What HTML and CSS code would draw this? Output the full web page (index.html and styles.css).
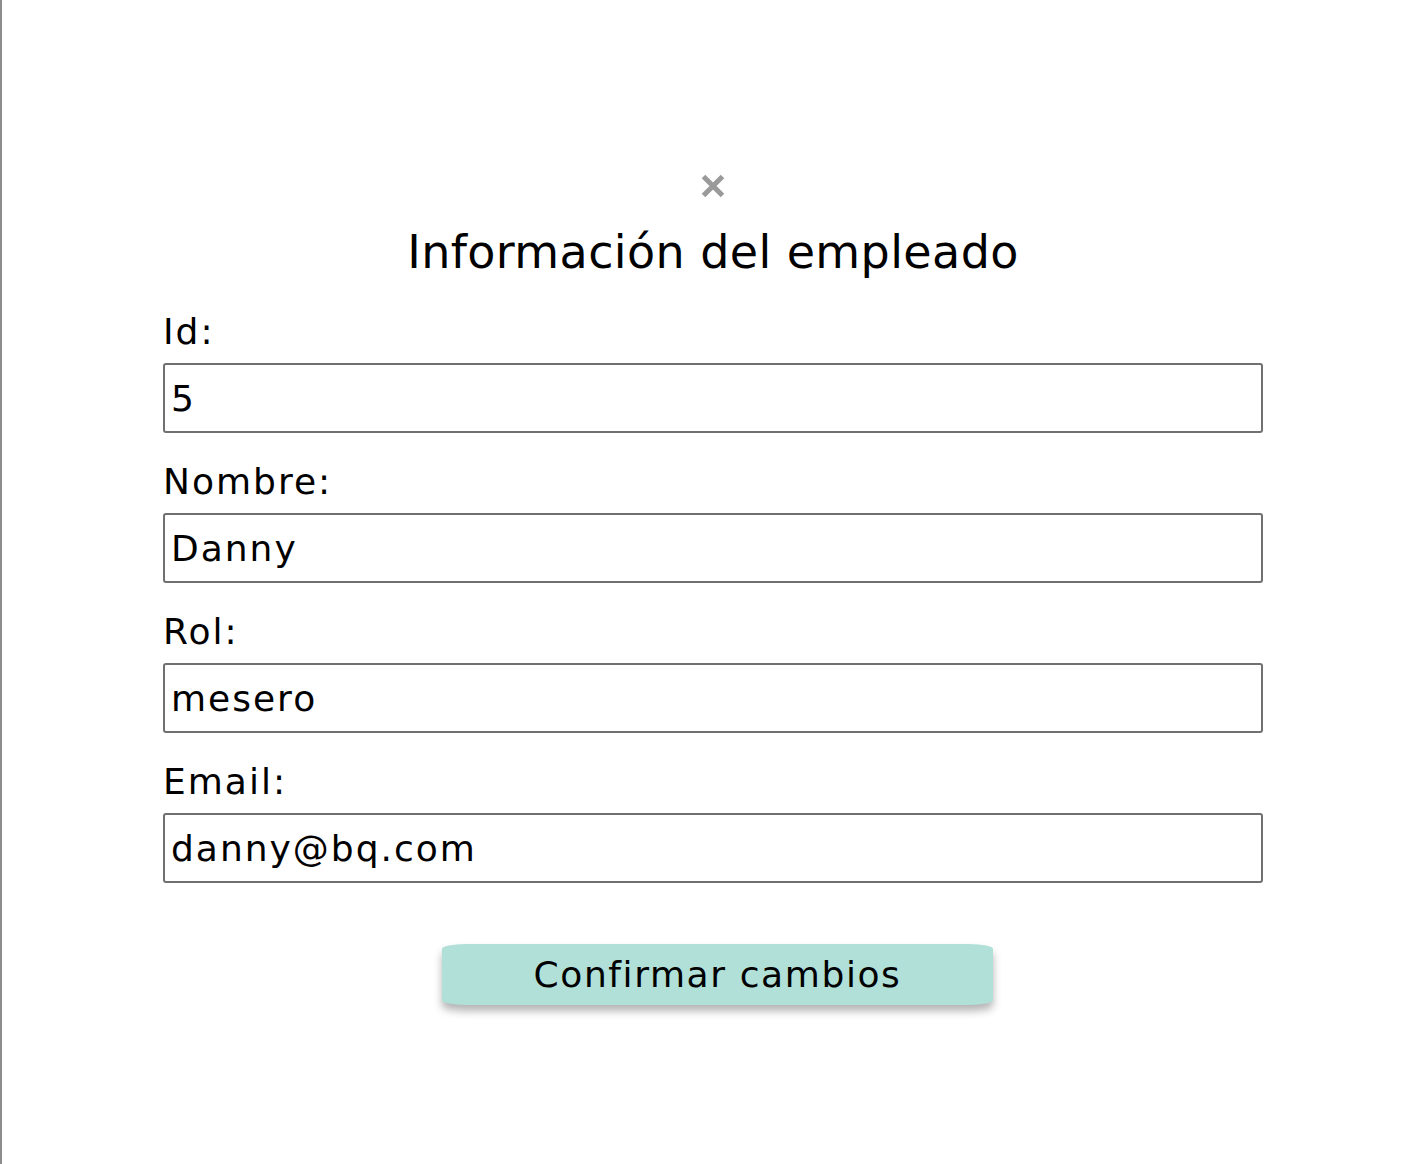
FILE: index.html
```html
<!DOCTYPE html>
<html lang="es">
<head>
<meta charset="utf-8">
<title>Información del empleado</title>
<link rel="stylesheet" href="styles.css">
</head>
<body>
<main class="modal">
  <button class="close" type="button" aria-label="Cerrar">
    <svg width="24" height="24" viewBox="0 0 24 24"><path d="M2.5 2.5 L21.5 21.5 M21.5 2.5 L2.5 21.5" stroke="#9a9a9a" stroke-width="5" fill="none"/></svg>
  </button>
  <h1 class="title">Información del empleado</h1>
  <form class="form">
    <div class="field">
      <label class="label">Id:</label>
      <input class="input" type="text" value="5">
    </div>
    <div class="field">
      <label class="label">Nombre:</label>
      <input class="input" type="text" value="Danny">
    </div>
    <div class="field">
      <label class="label">Rol:</label>
      <input class="input" type="text" value="mesero">
    </div>
    <div class="field">
      <label class="label">Email:</label>
      <input class="input" type="text" value="danny@bq.com">
    </div>
    <div class="actions">
      <button class="confirm" type="button">Confirmar cambios</button>
    </div>
  </form>
</main>
</body>
</html>
```
FILE: styles.css
```css
html, body {
  margin: 0;
  padding: 0;
  background: #ffffff;
}
body {
  border-left: 2px solid #8c8c8c;
  min-height: 1164px;
  box-sizing: border-box;
  font-family: "DejaVu Sans", sans-serif;
  color: #000;
}
.modal {
  width: 1100px;
  margin: 0 auto;
  padding-top: 174px;
  display: flex;
  flex-direction: column;
  align-items: center;
}
.close {
  width: 24px;
  height: 24px;
  padding: 0;
  border: 0;
  background: none;
  display: block;
}
.close svg { display: block; }
.title {
  margin: 26px 0 30px;
  font-size: 46px;
  font-weight: 400;
  line-height: 56px;
  letter-spacing: 0.4px;
}
.form {
  width: 100%;
  display: flex;
  flex-direction: column;
}
.field {
  display: flex;
  flex-direction: column;
  margin-top: 27px;
}
.field:first-child { margin-top: 0; }
.label {
  font-size: 36px;
  line-height: 44px;
  height: 44px;
  letter-spacing: 2px;
  margin-bottom: 9px;
}
.input {
  height: 70px;
  box-sizing: border-box;
  border: 2px solid #707070;
  border-radius: 3px;
  padding: 0 6px;
  font-family: inherit;
  font-size: 36px;
  letter-spacing: 2px;
  color: #000;
  margin: 0;
}
.actions {
  display: flex;
  justify-content: center;
  margin-top: 61px;
  padding-left: 9px;
}
.confirm {
  width: 551px;
  height: 61px;
  border: 0;
  padding: 0;
  background: #b0e0d8;
  border-radius: 24px / 5px;
  box-shadow: 0 6px 8px rgba(0, 0, 0, 0.3);
  font-family: inherit;
  font-size: 36px;
  letter-spacing: 1.6px;
  color: #000;
}
```
